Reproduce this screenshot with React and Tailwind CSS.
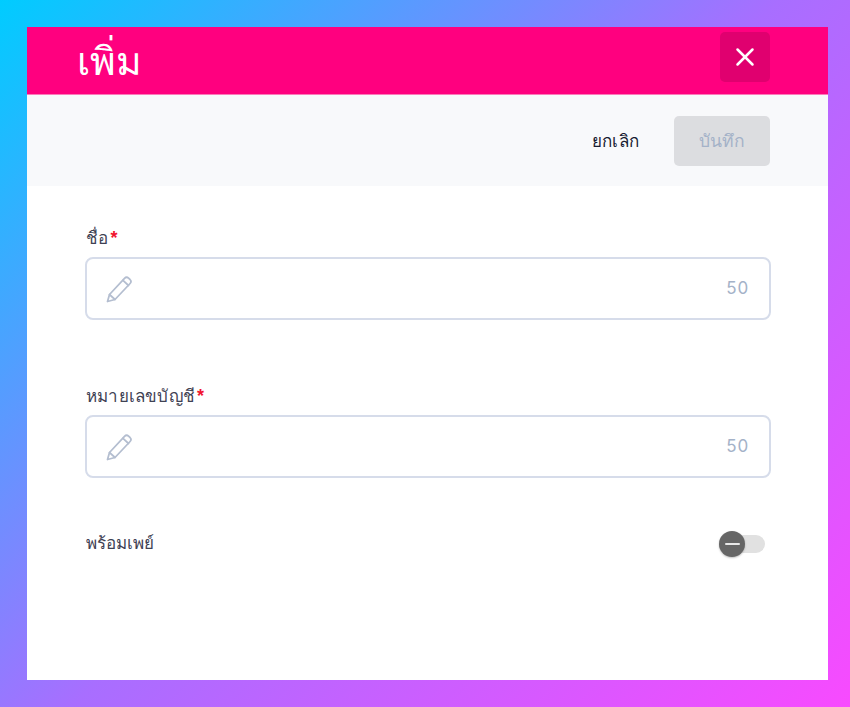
// App.jsx
import { X } from "lucide-react";

const Pencil = () => (
  <svg width="28" height="28" viewBox="0 0 28 28" fill="none" stroke="#b4bed0" strokeWidth="1.75" strokeLinejoin="round" strokeLinecap="round">
    <path d="M2.5 26.5 L4.5 19.5 L19.5 3.4 C20.6 2.2 22.4 2.1 23.6 3.2 L25 4.5 C26.1 5.6 26.2 7.3 25.1 8.5 L10 24.5 Z" />
    <path d="M18 5.3 L23.5 10.5" />
    <path d="M4.5 19.5 L10 24.5" />
  </svg>
);

const Field = ({ label, className }) => (
  <div className={className}>
    <label className="flex h-[24px] items-center pl-[1px] pt-[4px] text-[17px] leading-[24px] tracking-[0.2px] text-[#3f4254]">
      {label}
      <span className="ml-[2px] mt-[-2px] text-[18px] font-bold text-[#f1152f]">*</span>
    </label>
    <div className="mt-[8px] flex h-[63px] items-center justify-between rounded-[8px] border-2 border-[#d6dcea] bg-white pl-[18px] pr-[20px]">
      <Pencil />
      <span className="font-['Inter',sans-serif] text-[17px] tracking-[0.8px] text-[#a4b2c8]">50</span>
    </div>
  </div>
);

export default function App() {
  return (
    <div className="h-[707px] w-full bg-[linear-gradient(135deg,#00ccff_0%,#a86eff_50%,#f84aff_100%)] pb-[27px] pl-[27px] pr-[22px] pt-[27px] font-['Liberation_Sans',sans-serif]">
      <div className="flex h-full flex-col bg-white">
        <header className="flex h-[68px] justify-between border-b border-[#fb7ab9] bg-[#ff007f] pl-[50px] pr-[58px]">
          <h1 className="mt-[10px] text-[39px] leading-[50px] text-white">เพิ่ม</h1>
          <button className="mt-[5px] flex h-[50px] w-[50px] items-center justify-center rounded-[5px] bg-[#e0006f] text-white">
            <X size={30} strokeWidth={2} />
          </button>
        </header>

        <div className="flex h-[91px] items-center justify-end gap-[35px] bg-[#f8f9fb] pr-[58px]">
          <button className="pt-[2px] text-[17px] tracking-[0.2px] text-[#181c32]">ยกเลิก</button>
          <button className="h-[50px] w-[96px] rounded-[5px] bg-[#dcdde0] pt-[2px] text-[17.5px] text-[#a4b2c8]">บันทึก</button>
        </div>

        <div className="flex-1 pl-[58px] pr-[57px] pt-[39px]">
          <Field label="ชื่อ" />
          <Field label="หมายเลขบัญชี" className="mt-[63px]" />
          <div className="mt-[54px] flex items-center justify-between pr-[6px]">
            <span className="pl-[1px] text-[17px] leading-[24px] text-[#3f4254]">พร้อมเพย์</span>
            <div className="flex h-[18px] w-[46px] items-center rounded-full bg-[#e1e1e1]">
              <div className="flex h-[26px] w-[26px] items-center justify-center rounded-full bg-[#666666] shadow-[0_1px_2px_rgba(0,0,0,0.25)]">
                <div className="h-[2.5px] w-[15px] rounded-full bg-[#e8e8e8]" />
              </div>
            </div>
          </div>
        </div>
      </div>
    </div>
  );
}
